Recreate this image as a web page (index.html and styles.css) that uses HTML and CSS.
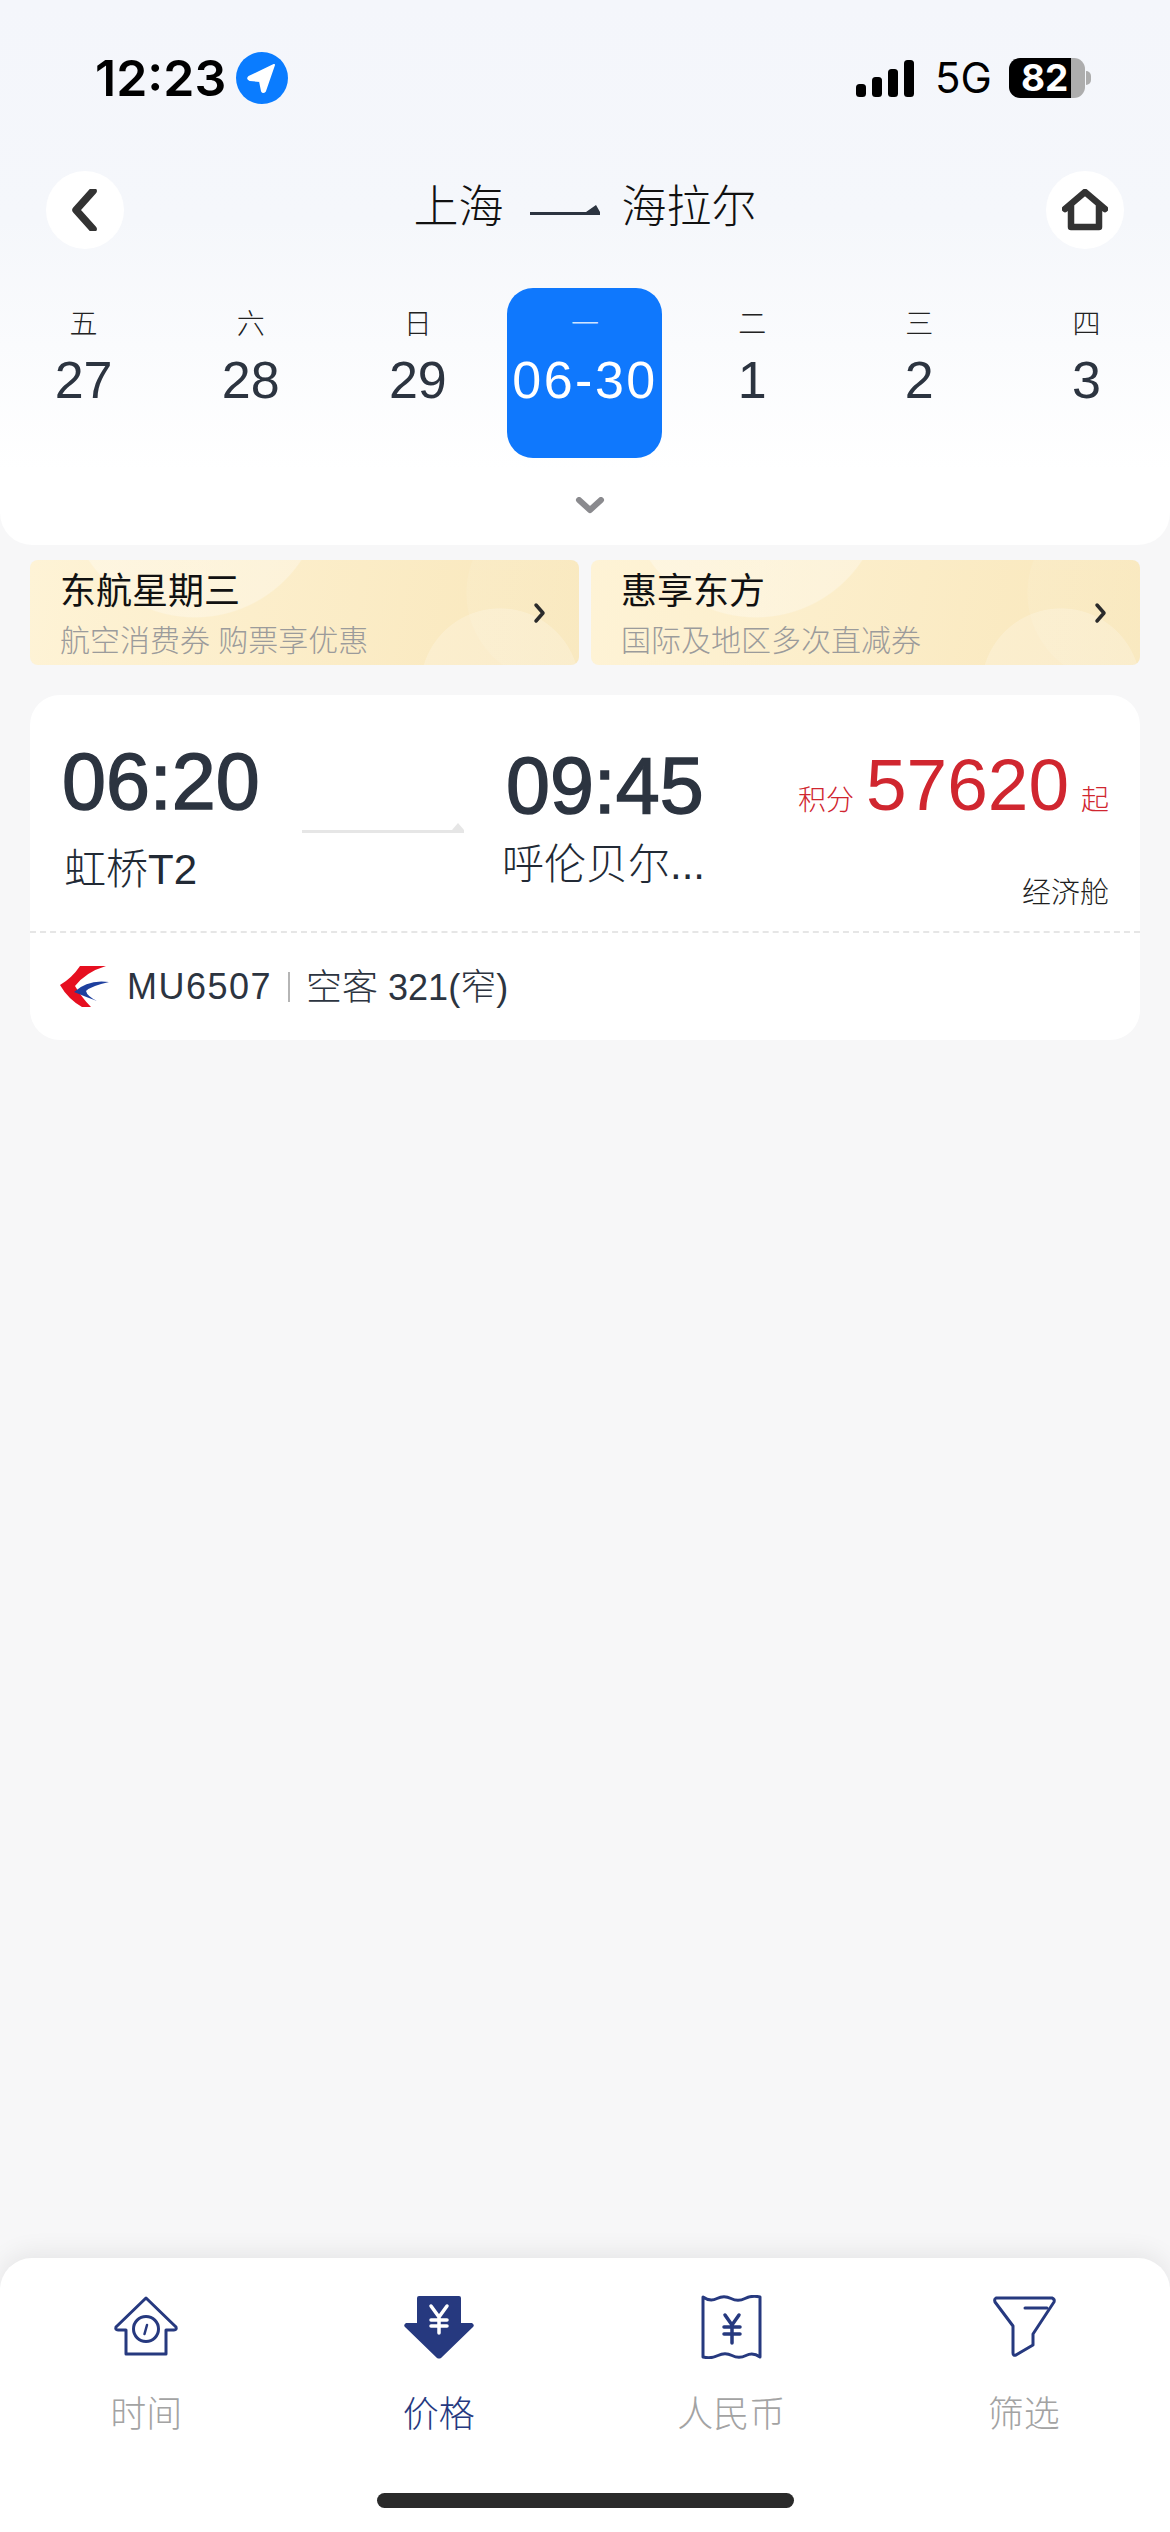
FILE: index.html
```html
<!DOCTYPE html>
<html lang="zh">
<head>
    <meta charset="UTF-8">
    <meta name="viewport" content="width=device-width, initial-scale=1.0">
    <title>航班列表</title>
    <link rel="stylesheet" href="styles.css">
</head>
<body>
    <div class="page">
        <!-- 顶部:状态栏 + 导航 + 日期 -->
        <header class="header">
            <div class="status-bar">
                <div class="status-left">
                    <span class="clock">12:23</span>
                    <svg class="loc" viewBox="0 0 52 52">
                        <circle cx="26" cy="26" r="26" fill="#0a7cff"/>
                        <path d="M38 13 L13 25 Q11 27 14 28 L24 29 L26 39 Q27 41 29 39 Z" fill="#fff" stroke="#fff" stroke-width="2" stroke-linejoin="round"/>
                    </svg>
                </div>
                <div class="status-right">
                    <svg class="signal" viewBox="0 0 58 37">
                        <rect x="0" y="24" width="10" height="13" rx="3.5"/>
                        <rect x="16" y="17" width="10" height="20" rx="3.5"/>
                        <rect x="32" y="9" width="10" height="28" rx="3.5"/>
                        <rect x="48" y="0" width="10" height="37" rx="3.5"/>
                    </svg>
                    <span class="net">5G</span>
                    <div class="battery">
                        <div class="battery-body"><span class="battery-num">82</span></div>
                        <div class="battery-nub"></div>
                    </div>
                </div>
            </div>

            <div class="nav">
                <div class="round-btn">
                    <svg class="nav-icon" viewBox="0 0 46 42">
                        <path d="M31 2 L14 21 L31 40" fill="none" stroke="#333" stroke-width="7.5" stroke-linecap="round" stroke-linejoin="round"/>
                    </svg>
                </div>
                <div class="route">
                    <span>上海</span>
                    <svg class="route-arrow" viewBox="0 0 70 12">
                        <path d="M0 9 H70 V12 H0 Z M56 9 L66 2 L70 9 Z" fill="#2c3440"/>
                    </svg>
                    <span>海拉尔</span>
                </div>
                <div class="round-btn">
                    <svg class="nav-icon" viewBox="0 0 46 42">
                        <path d="M3 20 L23 3 L43 20 M9 16 V38 H37 V16" fill="none" stroke="#333" stroke-width="6.5" stroke-linecap="round" stroke-linejoin="round"/>
                    </svg>
                </div>
            </div>

            <div class="dates">
                <div class="date"><span class="week">五</span><span class="day">27</span></div>
                <div class="date"><span class="week">六</span><span class="day">28</span></div>
                <div class="date"><span class="week">日</span><span class="day">29</span></div>
                <div class="date date-active"><span class="week">一</span><span class="day">06-30</span></div>
                <div class="date"><span class="week">二</span><span class="day">1</span></div>
                <div class="date"><span class="week">三</span><span class="day">2</span></div>
                <div class="date"><span class="week">四</span><span class="day">3</span></div>
            </div>

            <svg class="expand" viewBox="0 0 30 18">
                <path d="M4 3 L15 13 L26 3" fill="none" stroke="#8a8a8e" stroke-width="6" stroke-linecap="round" stroke-linejoin="round"/>
            </svg>
        </header>

        <main class="content">
            <div class="promos">
                <div class="promo">
                    <div class="promo-text">
                        <div class="promo-title">东航星期三</div>
                        <div class="promo-sub">航空消费券 购票享优惠</div>
                    </div>
                    <svg class="promo-arrow" viewBox="0 0 14 22">
                        <path d="M3 3 L10 11 L3 19" fill="none" stroke="#2b2b2b" stroke-width="3.5" stroke-linecap="round" stroke-linejoin="round"/>
                    </svg>
                </div>
                <div class="promo">
                    <div class="promo-text">
                        <div class="promo-title">惠享东方</div>
                        <div class="promo-sub">国际及地区多次直减券</div>
                    </div>
                    <svg class="promo-arrow" viewBox="0 0 14 22">
                        <path d="M3 3 L10 11 L3 19" fill="none" stroke="#2b2b2b" stroke-width="3.5" stroke-linecap="round" stroke-linejoin="round"/>
                    </svg>
                </div>
            </div>

            <div class="flight">
                <div class="flight-main">
                    <div class="leg leg-from">
                        <div class="time">06:20</div>
                        <div class="place">虹桥T2</div>
                    </div>
                    <svg class="leg-arrow" viewBox="0 0 162 10">
                        <path d="M0 7 H162 V10 H0 Z M150 7 L156 0 L162 7 Z" fill="#e6e6e6"/>
                    </svg>
                    <div class="leg leg-to">
                        <div class="time">09:45</div>
                        <div class="place">呼伦贝尔...</div>
                    </div>
                    <div class="fare">
                        <div class="price">
                            <span class="price-unit">积分</span>
                            <span class="price-num">57620</span>
                            <span class="price-unit">起</span>
                        </div>
                        <div class="cabin">经济舱</div>
                    </div>
                </div>
                <div class="flight-foot">
                    <svg class="airline" viewBox="0 0 50 42">
                        <path d="M20 0 H46 Q26 6 15 20 Q22 32 31 41 H22 Q8 33 0 19 Q12 12 20 0 Z" fill="#e60f20"/>
                        <path d="M49 16 Q28 13 14 26 Q26 31 37 35 Q27 30 26 25 Q31 20 49 16 Z" fill="#1e3f9e"/>
                    </svg>
                    <span class="flight-no">MU6507</span>
                    <span class="sep"></span>
                    <span class="plane">空客 321(窄)</span>
                </div>
            </div>
        </main>

        <nav class="tabbar">
            <div class="tabs">
                <div class="tab">
                    <svg class="tab-icon" viewBox="-3 -1 70 64">
                        <path d="M32 2 L62 31 Q63 34 60 34 H52 V58 H12 V34 H4 Q1 34 2 31 Z" fill="none" stroke="#26397f" stroke-width="3" stroke-linejoin="round"/>
                        <circle cx="32" cy="33" r="12.5" fill="none" stroke="#26397f" stroke-width="3"/>
                        <path d="M30.5 38 L33 29" stroke="#26397f" stroke-width="2.5" stroke-linecap="round"/>
                    </svg>
                    <span>时间</span>
                </div>
                <div class="tab tab-active">
                    <svg class="tab-icon" viewBox="0 0 70 64">
                        <path d="M13 3 Q13 1 15 1 H55 Q57 1 57 3 V28 H68 Q71 30 69 32 L37 63 Q35 64 33 63 L1 32 Q-1 30 2 28 H13 Z" fill="#26397f"/>
                        <path d="M27 11 L35 22 L43 11 M27 25 H43 M27 31 H43 M35 22 V38" fill="none" stroke="#fff" stroke-width="3.5" stroke-linecap="round"/>
                    </svg>
                    <span>价格</span>
                </div>
                <div class="tab">
                    <svg class="tab-icon" viewBox="-6 0 70 64">
                        <path d="M1 2 Q8 7 15 3.5 T29 3.5 T43 3.5 T58 2 V62 Q51 57 44 60.5 T30 60.5 T16 60.5 T1 62 Z" fill="none" stroke="#26397f" stroke-width="3" stroke-linejoin="round"/>
                        <path d="M23 20 L30 30 L37 20 M22 32 H38 M22 39 H38 M30 30 V48" fill="none" stroke="#26397f" stroke-width="3.5" stroke-linecap="round"/>
                    </svg>
                    <span>人民币</span>
                </div>
                <div class="tab">
                    <svg class="tab-icon" viewBox="-4 -1 70 64">
                        <path d="M3 2 H59 Q62 3 61 6 L40 38 V49 L23 59 Q20 60 20 57 V30 L2 6 Q1 3 3 2 Z" fill="none" stroke="#26397f" stroke-width="3" stroke-linejoin="round"/>
                        <path d="M32 12 H54" stroke="#26397f" stroke-width="3" stroke-linecap="round"/>
                    </svg>
                    <span>筛选</span>
                </div>
            </div>
            <div class="home-bar"></div>
        </nav>
    </div>
</body>
</html>
```

FILE: styles.css
```css
/* 全局 */
* {
    box-sizing: border-box;
}

body {
    margin: 0;
    background: #f7f7f8;
    font-family: "Liberation Sans", "Noto Sans CJK SC", sans-serif;
    color: #2c3440;
}

.page {
    width: 1170px;
    height: 2532px;
    display: flex;
    flex-direction: column;
}

/* 顶部 */
.header {
    height: 545px;
    background: linear-gradient(180deg, #f4f6fb 0, #f5f7fb 220px, #fff 470px);
    border-radius: 0 0 32px 32px;
    display: flex;
    flex-direction: column;
}

.status-bar {
    height: 171px;
    padding: 52px 79px 0 95px;
    display: flex;
    justify-content: space-between;
    align-items: flex-start;
}

.status-left {
    display: flex;
    align-items: center;
    gap: 10px;
}

.clock {
    font-family: Inter, sans-serif;
    font-size: 50px;
    font-weight: 600;
    line-height: 52px;
    color: #000;
}

.loc {
    width: 52px;
    height: 52px;
}

.status-right {
    display: flex;
    align-items: center;
    padding-top: 6px;
}

.signal {
    width: 58px;
    height: 37px;
    margin-right: 21px;
}

.net {
    font-family: Inter, sans-serif;
    font-size: 42px;
    line-height: 40px;
    color: #000;
    width: 74px;
}

.battery {
    display: flex;
    align-items: center;
}

.battery-body {
    width: 76px;
    height: 40px;
    border-radius: 11px;
    background: linear-gradient(90deg, #000 0, #000 62px, #adadad 62px);
}

.battery-num {
    display: block;
    width: 62px;
    padding-left: 12px;
    font-family: Inter, sans-serif;
    font-size: 37px;
    font-weight: 700;
    line-height: 40px;
    white-space: nowrap;
    color: #fff;
}

.battery-nub {
    width: 5px;
    height: 14px;
    margin-left: 1px;
    border-radius: 0 5px 5px 0;
    background: #adadad;
}

.nav {
    height: 78px;
    padding: 0 46px;
    display: flex;
    justify-content: space-between;
    align-items: center;
}

.round-btn {
    width: 78px;
    height: 78px;
    border-radius: 50%;
    background: #fff;
    display: flex;
    justify-content: center;
    align-items: center;
}

.nav-icon {
    width: 46px;
    height: 42px;
}

.route {
    display: flex;
    align-items: center;
    margin-top: -4px;
    font-size: 45px;
    font-weight: 300;
    color: #111;
    line-height: 60px;
}

.route-arrow {
    width: 70px;
    height: 12px;
    margin: 2px 22px 0 26px;
}

/* 日期 */
.dates {
    margin-top: 39px;
    display: grid;
    grid-template-columns: repeat(7, 1fr);
}

.date {
    height: 170px;
    padding-top: 20px;
    display: flex;
    flex-direction: column;
    align-items: center;
}

.date-active {
    width: 155px;
    justify-self: center;
    background: #0f78fd;
    border-radius: 26px;
    color: #fff;
}

.week {
    font-size: 28px;
    font-weight: 300;
    line-height: 34px;
    color: #222;
}

.date-active .week {
    color: #cfe4ff;
}

.day {
    margin-top: 7px;
    font-size: 52px;
    line-height: 62px;
    white-space: nowrap;
}

.date-active .day {
    letter-spacing: 2.5px;
}

.expand {
    width: 30px;
    height: 18px;
    margin: 39px 0 0 575px;
}

/* 优惠 */
.content {
    flex: 1;
    padding: 15px 30px 0;
}

.promos {
    display: grid;
    grid-template-columns: 549px 549px;
    gap: 12px;
}

.promo {
    height: 105px;
    padding: 4px 32px 0 30px;
    border-radius: 8px;
    display: flex;
    justify-content: space-between;
    align-items: center;
    background:
        radial-gradient(circle 80px at 470px 128px, rgba(255, 255, 255, .2) 99%, transparent 100%),
        radial-gradient(circle 90px at 526px 33px, rgba(255, 255, 255, .08) 99%, transparent 100%),
        radial-gradient(circle 128px at 165px -70px, rgba(255, 255, 255, .3) 99%, transparent 100%),
        linear-gradient(100deg, #fef3d6, #f9e7bb);
}

.promo-title {
    font-size: 36px;
    line-height: 44px;
    color: #111;
}

.promo-sub {
    margin-top: 8px;
    font-size: 30px;
    line-height: 38px;
    font-weight: 300;
    color: #9b9b9b;
    white-space: nowrap;
}

.promo-arrow {
    width: 14px;
    height: 22px;
    margin-bottom: 4px;
}

/* 航班卡片 */
.flight {
    margin-top: 30px;
    height: 345px;
    background: #fff;
    border-radius: 30px;
    display: flex;
    flex-direction: column;
}

.flight-main {
    height: 238px;
    border-bottom: 2px dashed #e6e6e6;
    padding: 0 31px 0 32px;
    display: flex;
}

.leg {
    display: flex;
    flex-direction: column;
}

.leg-from {
    width: 240px;
    padding-top: 50px;
}

.leg-to {
    width: 266px;
    padding-top: 54px;
}

.time {
    font-size: 79px;
    line-height: 74px;
    color: #2c3440;
    -webkit-text-stroke: 1.5px #2c3440;
}

.place {
    font-size: 42px;
    font-weight: 300;
    line-height: 56px;
    color: #222a35;
    white-space: nowrap;
}

.leg-from .place {
    margin: 23px 0 0 2px;
}

.leg-to .place {
    margin: 14px 0 0 -4px;
}

.leg-arrow {
    width: 162px;
    height: 10px;
    margin: 128px 42px 0 0;
    flex: none;
}

.fare {
    flex: 1;
    padding-top: 50px;
    display: flex;
    flex-direction: column;
    align-items: flex-end;
}

.price {
    display: flex;
    align-items: baseline;
    gap: 12px;
    white-space: nowrap;
    color: #d0262f;
}

.price-unit {
    font-size: 28px;
    font-weight: 300;
}

.price-num {
    font-size: 73px;
    line-height: 80px;
}

.cabin {
    margin-top: 49px;
    font-size: 29px;
    font-weight: 300;
    line-height: 38px;
    color: #1f1f1f;
}

.flight-foot {
    flex: 1;
    padding: 0 32px 0 30px;
    display: flex;
    align-items: center;
}

.airline {
    width: 50px;
    height: 42px;
}

.flight-no {
    margin-left: 17px;
    font-size: 36px;
    color: #2c3440;
    letter-spacing: 1.5px;
}

.sep {
    width: 2px;
    height: 30px;
    margin: 0 16px 0 16px;
    background: #b5b5b5;
}

.plane {
    margin-top: -5px;
    font-size: 36px;
    font-weight: 300;
    color: #2c3440;
}

/* 底部标签栏 */
.tabbar {
    height: 274px;
    padding-top: 37px;
    background: #fff;
    border-radius: 32px 32px 0 0;
    box-shadow: 0 -6px 24px rgba(0, 0, 0, .07);
}

.tabs {
    display: grid;
    grid-template-columns: repeat(4, 1fr);
}

.tab {
    height: 143px;
    display: flex;
    flex-direction: column;
    align-items: center;
    justify-content: space-between;
    font-size: 36px;
    font-weight: 300;
    line-height: 46px;
    color: #a3a3a3;
}

.tab-active {
    color: #26397f;
}

.tab-icon {
    width: 70px;
    height: 64px;
}

.home-bar {
    width: 417px;
    height: 15px;
    margin: 55px auto 0;
    border-radius: 8px;
    background: #2a2a2a;
}
```
